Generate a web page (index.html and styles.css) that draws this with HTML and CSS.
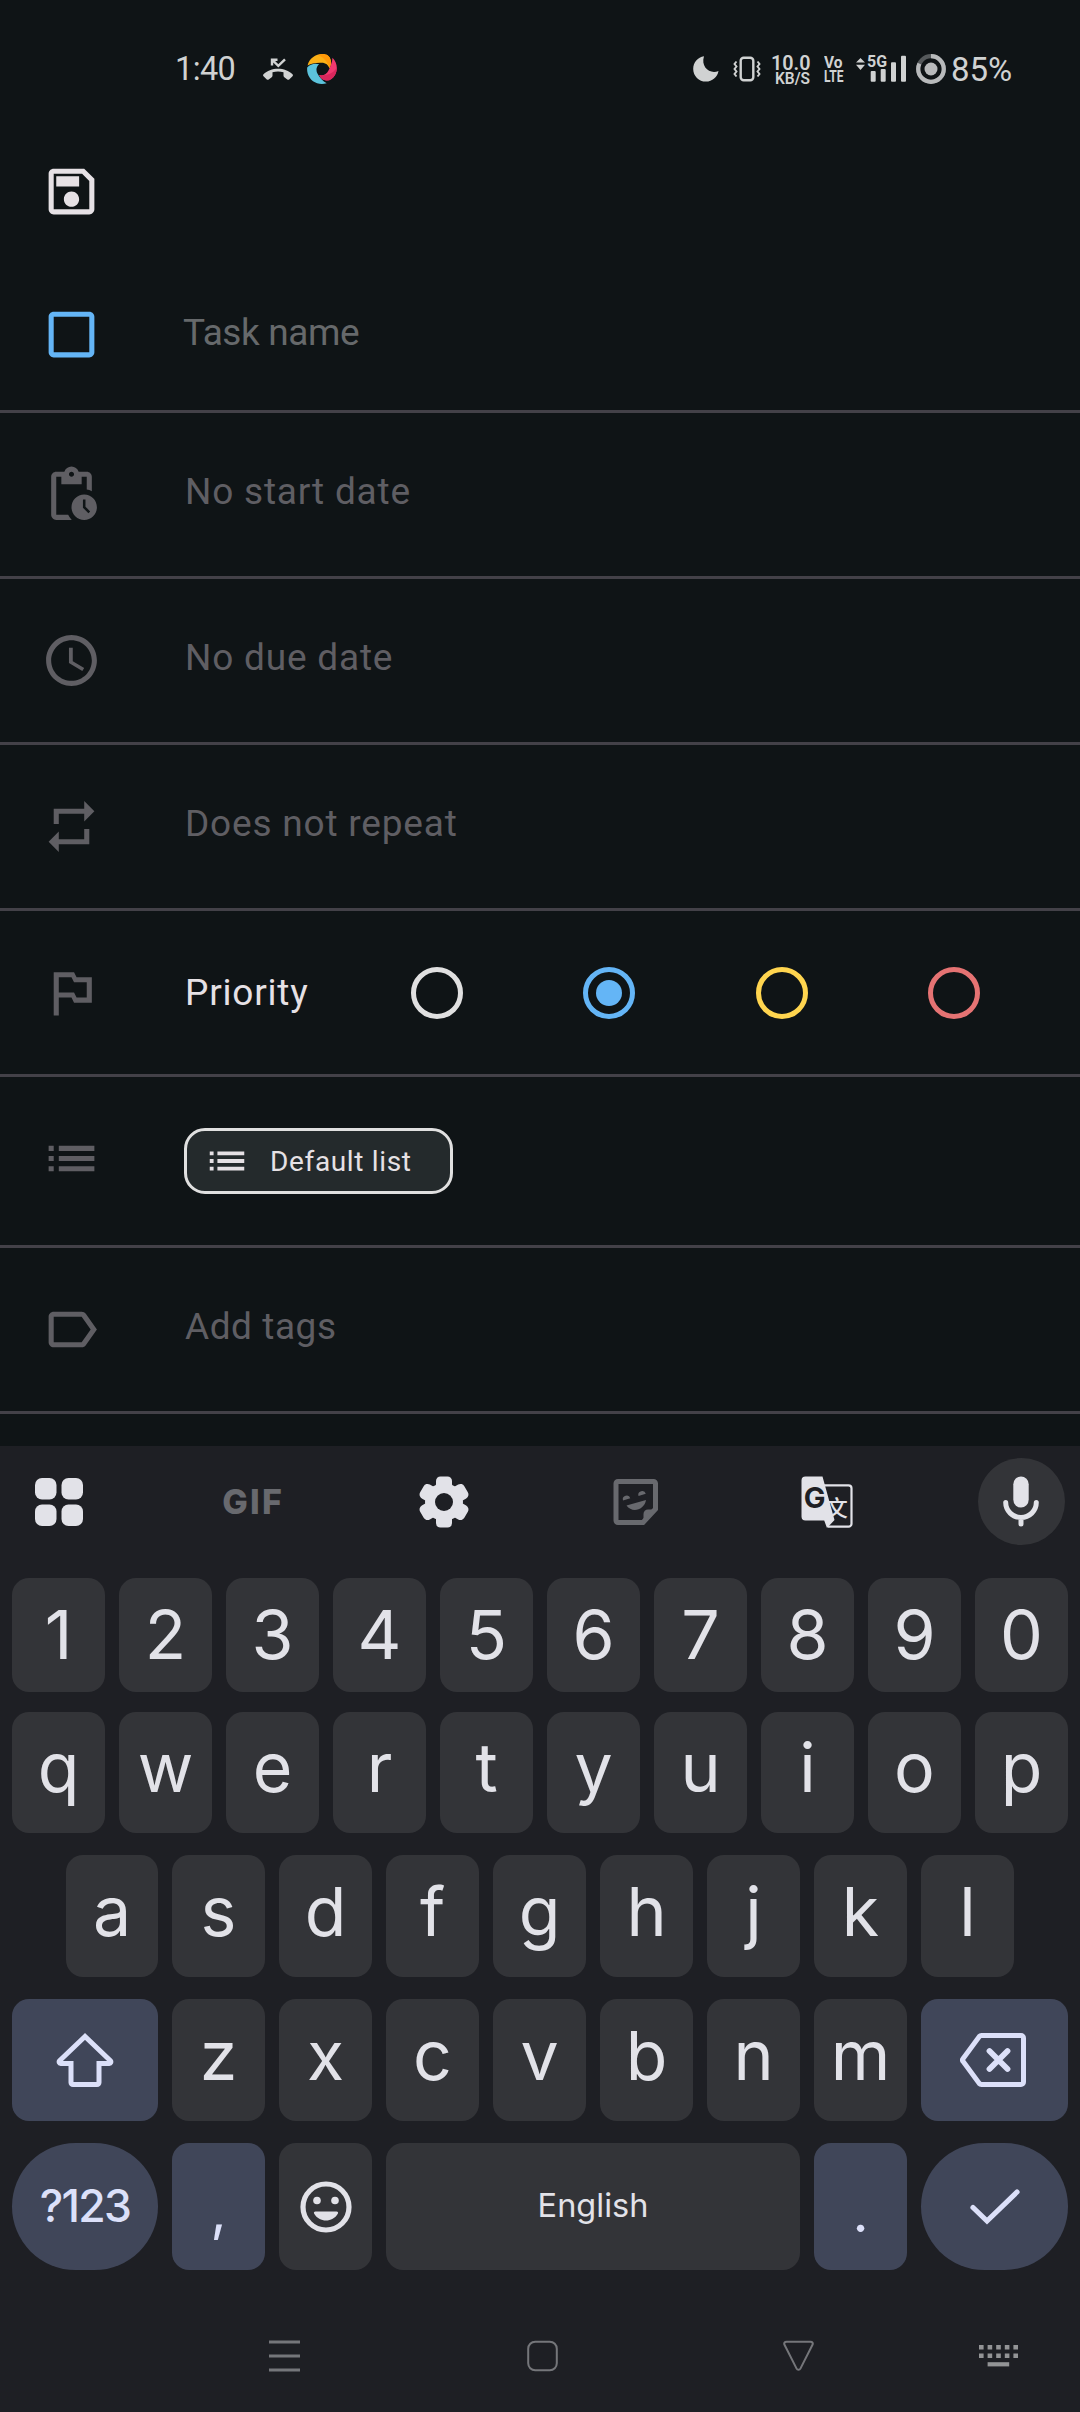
FILE: index.html
```html
<!DOCTYPE html>
<html lang="en">
<head>
<meta charset="utf-8">
<title>New task</title>
<link rel="stylesheet" href="styles.css">
</head>
<body>
<div class="screen">
  <header class="status">
    <span class="clock">1:40</span>
    <svg class="missed" width="30" height="23" viewBox="0 0 30 23"><path d="M15 10.800C9.500 10.800 4 12.800 .5 16.300c-.6.600-.6 1.300 0 1.900l3.300 3.200c.6.600 1.300.6 1.900.100l3-2.300c.5-.4.800-.9.800-1.500v-3.400c3.600-1.100 7.400-1.100 11 0v3.400c0 .6.300 1.100.8 1.500l3 2.300c.6.500 1.300.500 1.900-.1l3.300-3.200c.6-.6.600-1.300 0-1.900C26 12.800 20.500 10.800 15 10.800z" fill="#d0d2d2"/><path d="M9 7.500V1.700h5.500M9 1.700l6.300 6.200L22 1.300" fill="none" stroke="#d0d2d2" stroke-width="2.400"/></svg>
    <svg class="swirl" width="30" height="30" viewBox="0 0 30 30"><path d="M.6 11.500C2 4.500 8.500 0 15.500 0c4 0 7.500 2 8.300 6.500.5 3-.1 5.500-1.300 7.800C21.500 11 18.500 8.500 14 8.700 8 8.600 4 9.500.6 11.500z" fill="#fbb016"/><path d="M15.500 0c4 0 7.500 2 8.300 6.500.5 3-.1 5.500-1.300 7.800C21 9 18 4 11 1c1.500-.7 3-1 4.500-1z" fill="#ff9808"/><path d="M25.500 3.800c4.500 4.200 5.800 11.500 2.500 17.200-2.500 4.500-7 6.800-11.500 4.800-2-.9-3.400-2.500-4.300-4.800 3.500 1.200 7.600-.5 9.300-4.500 2-4 3.700-8 4-12.700z" fill="#f0386f"/><path d="M29.500 14c-3 5-9 8-17.300 7 .9 2.300 2.300 3.900 4.300 4.800 4.500 2 9-.3 11.500-4.800 1.300-2.200 1.700-4.500 1.500-7z" fill="#d9275c"/><path d="M.2 13.500c3-3.300 7.500-4.500 12-3.200-3 2-3.600 6.500-1.500 9.700 2.200 4 5 7 9 9.200C11.500 31.800 3 27.500.7 19.500.1 17.500 0 15.500.2 13.500z" fill="#5cc3dc"/></svg>
    <svg class="moon" width="26" height="26" viewBox="0 0 26 26"><path d="M11 .3C4.800 1.200.2 6.500.2 12.900.2 19.900 5.900 25.600 12.900 25.600c6.300 0 11.600-4.600 12.600-10.600C17 18.800 7.500 11 11 .3z" fill="#d0d2d2"/></svg>
    <svg class="vibrate" width="28" height="26" viewBox="0 0 28 26" fill="none" stroke="#d0d2d2"><rect x="7.700" y="1.800" width="12.600" height="22.400" rx="3" stroke-width="2.400"/><path d="M3.500 5.500l-2 2.500 2 2.500-2 2.500 2 2.500-2 2.500 2 2.500M24.500 5.500l2 2.500-2 2.500 2 2.500-2 2.500 2 2.500-2 2.500" stroke-width="1.900"/></svg>
    <svg class="speed" width="40" height="34" viewBox="0 0 40 34" fill="#d0d2d2"><text class="rate" x="0" y="18.300" textLength="39.500" lengthAdjust="spacingAndGlyphs">10.0</text><text class="unit" x="4" y="32" textLength="35" lengthAdjust="spacingAndGlyphs">KB/S</text></svg>
    <svg class="volte" width="20" height="34" viewBox="0 0 20 34" fill="#d0d2d2"><text x="0" y="16.400" textLength="18.500" lengthAdjust="spacingAndGlyphs">Vo</text><text x="0" y="30.200" textLength="19.500" lengthAdjust="spacingAndGlyphs">LTE</text></svg>
    <svg class="signal" width="51" height="38" viewBox="0 -4 51 38" fill="#d0d2d2"><path d="M0 8.500h9L4.500 4zM0 10.800h9L4.500 16z"/><text x="11" y="12.800" class="fiveg" textLength="20" lengthAdjust="spacingAndGlyphs">5G</text><rect x="14.700" y="17" width="5" height="10.800" rx="1"/><rect x="24.700" y="15" width="5" height="12.800" rx="1"/><rect x="35" y="8.300" width="5" height="19.500" rx="1"/><rect x="45" y="1.800" width="5" height="26" rx="1"/></svg>
    <svg class="battery" width="30" height="30" viewBox="0 0 30 30"><circle cx="15" cy="15" r="12.800" fill="none" stroke="#55595b" stroke-width="4.200"/><circle cx="15" cy="15" r="12.800" fill="none" stroke="#b8babb" stroke-width="4.200" pathLength="100" stroke-dasharray="82 18" transform="rotate(-90 15 15)"/><circle cx="15" cy="15" r="6.500" fill="#b8babb"/></svg>
    <span class="percent">85%</span>
  </header>

  <div class="appbar">
    <svg class="ic bright" viewBox="0 0 24 24"><path d="M17 3H5c-1.110 0-2 .9-2 2v14c0 1.100.89 2 2 2h14c1.100 0 2-.9 2-2V7l-4-4zm2 16H5V5h11.170L19 7.830V19zm-7-7c-1.660 0-3 1.340-3 3s1.340 3 3 3 3-1.340 3-3-1.340-3-3-3zM6 6h9v4H6z"/></svg>
  </div>

  <main class="form">
    <div class="row name">
      <svg class="ic blue" viewBox="0 0 24 24"><path d="M19 5v14H5V5h14m0-2H5c-1.100 0-2 .9-2 2v14c0 1.100.9 2 2 2h14c1.100 0 2-.9 2-2V5c0-1.100-.9-2-2-2z"/></svg>
      <span class="title">Task name</span>
    </div>
    <div class="row">
      <svg class="ic" viewBox="0 0 24 24"><path d="M17 12c-2.760 0-5 2.240-5 5s2.240 5 5 5 5-2.240 5-5-2.240-5-5-5zm1.650 7.350L16.500 17.200V14h1v2.790l1.850 1.850-.7.710zM18 3h-3.180C14.400 1.840 13.300 1 12 1s-2.400.84-2.820 2H6c-1.100 0-2 .9-2 2v15c0 1.100.9 2 2 2h6.110a6.743 6.743 0 0 1-1.420-2H6V5h2v3h8V5h2v5.080c.71.100 1.380.31 2 .6V5c0-1.100-.9-2-2-2zm-6 2c-.55 0-1-.45-1-1s.45-1 1-1 1 .45 1 1-.45 1-1 1z"/></svg>
      <span class="label">No start date</span>
    </div>
    <div class="row">
      <svg class="ic" viewBox="0 0 24 24"><path d="M11.990 2C6.470 2 2 6.480 2 12s4.470 10 9.990 10C17.520 22 22 17.520 22 12S17.520 2 11.990 2zM12 20c-4.420 0-8-3.580-8-8s3.580-8 8-8 8 3.580 8 8-3.580 8-8 8zm.5-13H11v6l5.250 3.150.75-1.230-4.500-2.670z"/></svg>
      <span class="label">No due date</span>
    </div>
    <div class="row">
      <svg class="ic" viewBox="0 0 24 24"><path d="M7 7h10v3l4-4-4-4v3H5v6h2V7zm10 10H7v-3l-4 4 4 4v-3h12v-6h-2v4z"/></svg>
      <span class="label">Does not repeat</span>
    </div>
    <div class="row">
      <svg class="ic" viewBox="0 0 24 24"><path d="M14 6l-1-2H5v17h2v-7h5l1 2h7V6h-6zm4 8h-4l-1-2H7V6h5l1 2h5v6z"/></svg>
      <span class="label on">Priority</span>
      <div class="radios">
        <i class="radio none"></i><i class="radio low checked"></i><i class="radio medium"></i><i class="radio high"></i>
      </div>
    </div>
    <div class="row lists">
      <svg class="ic" viewBox="0 0 24 24"><path d="M3 9h2V7H3v2zm0 4h2v-2H3v2zm0 4h2v-2H3v2zm4 0h14v-2H7v2zm0-4h14v-2H7v2zm0-6v2h14V7H7z"/></svg>
      <div class="chip">
        <svg viewBox="0 0 24 24"><path d="M3 9h2V7H3v2zm0 4h2v-2H3v2zm0 4h2v-2H3v2zm4 0h14v-2H7v2zm0-4h14v-2H7v2zm0-6v2h14V7H7z"/></svg>
        <span>Default list</span>
      </div>
    </div>
    <div class="row">
      <svg class="ic" viewBox="0 0 24 24"><path d="M17.630 5.840C17.270 5.330 16.670 5 16 5L5 5.010C3.900 5.010 3 5.900 3 7v10c0 1.100.9 1.990 2 1.990L16 19c.67 0 1.270-.33 1.630-.84L22 12l-4.370-6.160zM16 17H5V7h11l3.550 5L16 17z"/></svg>
      <span class="label tags">Add tags</span>
    </div>
  </main>

  <section class="keyboard">
    <div class="tools">
      <span><svg width="48" height="48" viewBox="0 0 48 48" fill="#e2e2e8"><rect width="21.500" height="21.500" rx="7"/><rect x="26.500" width="21.500" height="21.500" rx="7"/><rect y="26.500" width="21.500" height="21.500" rx="7"/><rect x="26.500" y="26.500" width="21.500" height="21.500" rx="7"/></svg></span>
      <span class="gif">GIF</span>
      <span><svg width="52" height="52" viewBox="-26 -26 52 52"><g fill="#e2e2e8"><circle r="19"/><rect x="-8" y="-25.500" width="16" height="51" rx="4.500"/><rect x="-8" y="-25.500" width="16" height="51" rx="4.500" transform="rotate(60)"/><rect x="-8" y="-25.500" width="16" height="51" rx="4.500" transform="rotate(120)"/></g><circle r="9" fill="#1e1f24"/></svg></span>
      <span><svg width="48" height="48" viewBox="0 0 48 48"><path d="M6 3.500h35.500a2 2 0 0 1 2 2V31L31 44.500H6a2 2 0 0 1-2-2v-37a2 2 0 0 1 2-2z" fill="none" stroke="#68696e" stroke-width="5"/><path d="M44.500 31.500H36a4.500 4.500 0 0 0-4.500 4.500v9.500z" fill="#68696e"/><path d="M11 22.500a3.700 3.700 0 0 1 7.300-2.200zM26.500 18a3.700 3.700 0 0 1 7.300-2.200zM14.500 27.500l19.500-5.500c-1.500 10-14 13.500-19.500 5.500z" fill="#68696e"/></svg></span>
      <span class="translate"><svg width="52" height="52" viewBox="0 0 52 52"><path d="M22 9.300h25.500a3 3 0 0 1 3 3v35.400a3 3 0 0 1-3 3H27" fill="none" stroke="#e2e2e8" stroke-width="2.200"/><path d="M4.500.5H21.500L33.500 44l-7.500 8-2.800-7.500H4.500a4 4 0 0 1-4-4v-36a4 4 0 0 1 4-4z" fill="#e2e2e8"/><text x="13.700" y="32" text-anchor="middle" class="tg">G</text><text x="35.800" y="39.500" text-anchor="middle" class="tz">文</text></svg></span>
      <span class="mic"><svg width="36" height="52" viewBox="0 0 36 52"><rect x="10.300" y=".5" width="15.400" height="31" rx="7.700" fill="#e2e2e8"/><path d="M2.700 26.500a15.300 15 0 0 0 30.600 0M18 41.500v6.500" fill="none" stroke="#e2e2e8" stroke-width="5" stroke-linecap="round"/></svg></span>
    </div>
    <div class="keys k1"><b>1</b><b>2</b><b>3</b><b>4</b><b>5</b><b>6</b><b>7</b><b>8</b><b>9</b><b>0</b></div>
    <div class="keys k2"><b>q</b><b>w</b><b>e</b><b>r</b><b>t</b><b>y</b><b>u</b><b>i</b><b>o</b><b>p</b></div>
    <div class="keys k3"><b>a</b><b>s</b><b>d</b><b>f</b><b>g</b><b>h</b><b>j</b><b>k</b><b>l</b></div>
    <div class="keys k4">
      <b class="fn"><svg width="58" height="56" viewBox="0 0 58 56"><path d="M29 4.500L3.600 28.800a1.600 1.600 0 0 0 1.100 2.700H15v19a2 2 0 0 0 2 2h24a2 2 0 0 0 2-2v-19h10.300a1.600 1.600 0 0 0 1.100-2.700z" fill="none" stroke="#dce0f9" stroke-width="5"/></svg></b>
      <b>z</b><b>x</b><b>c</b><b>v</b><b>b</b><b>n</b><b>m</b>
      <b class="fn del"><svg width="66" height="54" viewBox="0 0 66 54" fill="none" stroke="#dce0f9" stroke-width="5"><path d="M21.500 2.500H61a2.500 2.500 0 0 1 2.500 2.500v44a2.500 2.500 0 0 1-2.500 2.500H21.500a3 3 0 0 1-2.200-1L3.200 28.600a2.400 2.400 0 0 1 0-3.200L19.300 3.500a3 3 0 0 1 2.200-1z"/><path d="M29.500 18L47.500 36M47.500 18L29.500 36" stroke-width="5.800" stroke-linecap="round"/></svg></b>
    </div>
    <div class="keys k5">
      <b class="fn pill sym">?123</b>
      <b class="fn punct">,</b>
      <b><svg width="52" height="52" viewBox="0 0 52 52" fill="#e2e2e8"><circle cx="26" cy="26" r="23" fill="none" stroke="#e2e2e8" stroke-width="5.200"/><circle cx="17" cy="19.500" r="3.800"/><circle cx="35" cy="19.500" r="3.800"/><path d="M15.500 30.500h21c1.500 0 2 1 1.300 2.200-5 9-18.600 9-23.600 0-.7-1.200-.2-2.200 1.300-2.200z"/></svg></b>
      <b class="space">English</b>
      <b class="fn punct dot">.</b>
      <b class="fn pill"><svg width="50" height="36" viewBox="0 0 50 36"><path d="M3 18.500L17 32 47 3" fill="none" stroke="#dce0f9" stroke-width="5.200" stroke-linecap="round"/></svg></b>
    </div>
    <nav class="nav">
      <svg class="n1" width="31" height="32" viewBox="0 0 31 32"><path d="M0 2h31M0 16h31M0 30h31" stroke="#75767a" stroke-width="2.800"/></svg>
      <svg class="n2" width="31" height="32" viewBox="0 0 31 32"><rect x="1.200" y="1.700" width="28.600" height="28.600" rx="7" fill="none" stroke="#75767a" stroke-width="2"/></svg>
      <svg class="n3" width="31" height="32" viewBox="0 0 31 32"><path d="M3.500 1.700h24c1.800 0 2.800 1.500 2 3L17.400 28.600c-.8 1.500-3 1.500-3.800 0L1.500 4.700c-.8-1.500.2-3 2-3z" fill="none" stroke="#75767a" stroke-width="2"/></svg>
      <svg class="n4" width="39" height="22" viewBox="0 0 39 22"><path d="M0 2.200h39M0 10.700h39" stroke="#939496" stroke-width="4.400" stroke-dasharray="4.600 4"/><path d="M8.600 19.300h21.600" stroke="#939496" stroke-width="4.200"/></svg>
    </nav>
  </section>
</div>
</body>
</html>
```
FILE: styles.css
```css
* { box-sizing: border-box; }
body { margin: 0; background: #0f1416; font-family: Roboto, "Liberation Sans", sans-serif; }
svg { display: block; flex: none; }
.screen { width: 1080px; height: 2412px; display: flex; flex-direction: column; overflow: hidden; background: #0f1416; }

/* Status bar */
.status { height: 138px; display: flex; align-items: center; padding-left: 175px; color: #d0d2d2; flex: none; }
.clock { font-size: 32.500px; width: 88px; letter-spacing: -0.600px; }
.swirl { margin-left: 14px; }
.moon { margin-left: 356px; }
.vibrate { margin-left: 14px; }
.speed { margin-left: 10px; }
.rate { font: 600 20.500px Roboto, sans-serif; }
.unit { font: 600 16px Roboto, sans-serif; }
.volte { margin-left: 13px; font: 700 16px Roboto, sans-serif; }
.signal { margin-left: 12px; }
.fiveg { font: 700 17px Roboto, sans-serif; }
.battery { margin-left: 9px; }
.percent { margin-left: 5px; font-size: 33px; }

/* Task form */
.appbar { height: 122px; padding: 23px 0 0 41px; flex: none; }
.ic { width: 61px; height: 61px; fill: #5f5e63; }
.ic.bright { fill: #e6e1e5; }
.ic.blue { fill: #64b5f6; }
.form { height: 1186px; flex: none; }
.row { height: 166px; padding-left: 41px; display: flex; align-items: center; border-bottom: 3px solid #434148; }
.row.name { height: 153px; padding-bottom: 2px; }
.title { margin-left: 81px; padding-bottom: 4px; font-size: 37px; letter-spacing: -0.400px; color: #66696b; }
.label { margin-left: 83px; padding-bottom: 6px; font-size: 37px; letter-spacing: 0.800px; color: #5f5e63; }
.label.tags { letter-spacing: 0.550px; }
.label.on { padding-bottom: 0; color: #e6e1e5; width: 226px; }
.radios { display: flex; gap: 120.400px; }
.radio { width: 52px; height: 52px; border: 5.200px solid; border-radius: 50%; padding: 8px; }
.radio.none { color: #e0e0e0; }
.radio.low { color: #64b5f6; }
.radio.medium { color: #ffd54f; }
.radio.high { color: #e57373; }
.radio.checked::after { content: ""; display: block; width: 26px; height: 26px; border-radius: 50%; background: currentColor; }
.lists { height: 171px; }
.lists .ic { margin-top: -5px; }
.chip { margin-left: 82px; width: 269px; height: 66px; border: 3px solid #e0e0e0; border-radius: 21px; background: #242a2c; display: flex; align-items: center; padding-left: 17px; color: #e6e1e5; font-size: 28px; letter-spacing: 0.650px; }
.chip svg { width: 46px; height: 46px; fill: #e6e1e5; margin-right: 20px; }

/* Keyboard */
.keyboard { height: 966px; background: #1e1f24; font-family: Inter, "Noto Sans", sans-serif; flex: none; }
.tools { height: 111px; padding: 0 15px; display: flex; justify-content: space-between; align-items: center; }
.tools span { width: 87px; height: 87px; display: flex; align-items: center; justify-content: center; }
.tools .gif { padding-left: 4px; font-size: 34px; font-weight: 800; letter-spacing: 2.200px; color: #68696e; }
.tools .translate { padding-right: 3px; }
.mic { border-radius: 50%; background: #333438; }
.tg { font: 700 29px Inter, sans-serif; fill: #1e1f24; }
.tz { font: 500 22px "Noto Sans CJK SC", sans-serif; fill: #e2e2e8; }
.keys { display: flex; gap: 14px; padding: 0 12px; margin-bottom: 22px; }
.keys b { width: 93px; height: 100%; border-radius: 17px; background: #333438; color: #e2e2e8; font-size: 68px; font-weight: 400; line-height: 1; display: flex; align-items: center; justify-content: center; padding-bottom: 11px; }
.k1 { height: 114px; margin: 21px 0 20px; }
.k1 b { padding-bottom: 2px; }
.k2 { height: 121px; }
.k3 { height: 122px; padding: 0 66px; }
.k3 b:first-child { width: 92px; }
.k4 { height: 122px; }
.k5 { height: 127px; }
.keys .fn { background: #404659; color: #dce0f9; }
.k4 .fn { width: 146px; padding: 0; }
.k4 .del { width: 147px; padding-right: 3px; }
.k5 b { padding: 0; }
.k5 .pill { width: 147px; border-radius: 64px; }
.k5 .sym { width: 146px; font-size: 44.500px; font-weight: 500; letter-spacing: -1.700px; }
.k5 .space { width: 414px; font-size: 32.500px; }
.k5 .punct { font-size: 56px; padding-top: 6px; }
.k5 .dot { padding-top: 11px; }
.nav { display: flex; align-items: center; height: 128px; padding-left: 269px; }
.n2 { margin-left: 227px; }
.n3 { margin-left: 225px; }
.n4 { margin-left: 165px; }
```
